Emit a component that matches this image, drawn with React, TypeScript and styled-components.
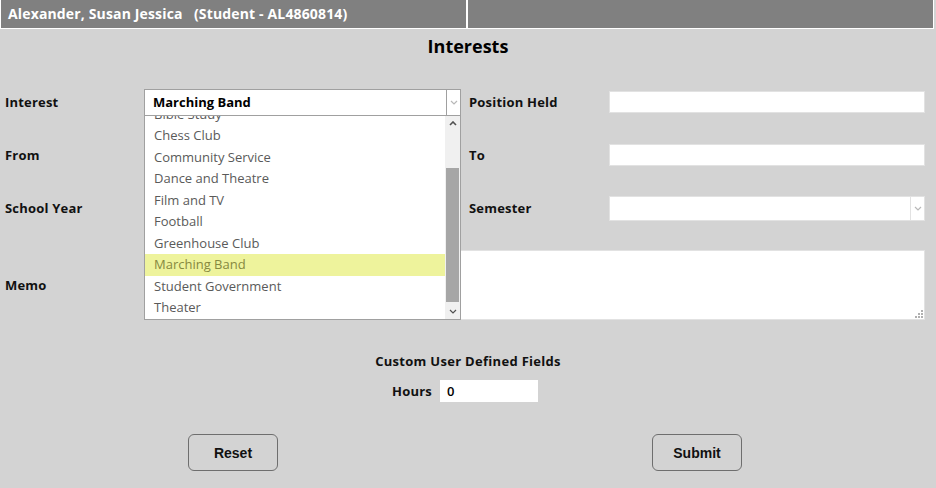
import styled, { createGlobalStyle } from "styled-components";

const GlobalStyle = createGlobalStyle`
  body {
    margin: 0;
    background: #d3d3d3;
    font-family: "Open Sans", "Liberation Sans", sans-serif;
  }
`;

const interests = [
  "Bible Study",
  "Chess Club",
  "Community Service",
  "Dance and Theatre",
  "Film and TV",
  "Football",
  "Greenhouse Club",
  "Marching Band",
  "Student Government",
  "Theater",
];

const Page = styled.div`
  width: 936px;
  height: 488px;
  overflow: hidden;
`;

const HeaderBar = styled.div`
  width: 934px;
  display: grid;
  grid-template-columns: 1fr 1fr;
  column-gap: 2px;
  padding: 0 1px 1px 1px;
  box-sizing: border-box;
  background: #fff;
`;

const HeaderCell = styled.div`
  height: 28px;
  background: #808080;
  color: #fff;
  font-weight: 700;
  font-size: 14px;
  letter-spacing: 0.15px;
  line-height: 28px;
  padding-left: 7px;
  white-space: pre;
`;

const Title = styled.h1`
  margin: 0;
  height: 34px;
  line-height: 34px;
  text-align: center;
  font-size: 18px;
  font-weight: 700;
  color: #000;
`;

const FormGrid = styled.div`
  margin-top: 26px;
  padding-left: 5px;
  display: grid;
  grid-template-columns: 139px 317px 148px 316px;
  grid-template-rows: 26px 22px 26px 70px;
  row-gap: 29px;
  align-items: center;
`;

const Label = styled.div<{ $right?: boolean }>`
  font-size: 13px;
  font-weight: 700;
  letter-spacing: 0.2px;
  color: #111;
  padding-left: ${(p) => (p.$right ? "8px" : "0")};
`;

const MemoLabel = styled(Label)`
  align-self: center;
`;

const TextInput = styled.input`
  box-sizing: border-box;
  width: 100%;
  height: 22px;
  border: 1px solid #e2e2e2;
  background: #fff;
  font-family: inherit;
  font-size: 13px;
  padding: 0 6px;
  outline: none;
`;

const SelectBox = styled.div<{ $open?: boolean }>`
  position: relative;
  box-sizing: border-box;
  height: ${(p) => (p.$open ? "27px" : "25px")};
  border: 1px solid ${(p) => (p.$open ? "#a0a0a0" : "#e2e2e2")};
  background: #fff;
  display: flex;
  align-items: center;
`;

const SelectValue = styled.div`
  flex: 1;
  padding-left: 8px;
  font-size: 13px;
  font-weight: 700;
  color: #000;
`;

const ChevronCell = styled.div<{ $open?: boolean }>`
  width: 13px;
  align-self: stretch;
  border-left: 1px solid ${(p) => (p.$open ? "#a0a0a0" : "#e2e2e2")};
  display: flex;
  align-items: center;
  justify-content: center;
`;

const Dropdown = styled.div`
  position: absolute;
  left: -1px;
  right: -1px;
  top: 100%;
  height: 205px;
  box-sizing: border-box;
  border: 1px solid #a0a0a0;
  background: #fff;
  display: flex;
  z-index: 5;
  overflow: hidden;
`;

const OptionList = styled.div`
  flex: 1;
  overflow: hidden;
`;

const OptionScroll = styled.div`
  margin-top: -12px;
`;

const Option = styled.div<{ $selected?: boolean }>`
  height: 21.5px;
  line-height: 21.5px;
  padding-left: 9px;
  font-size: 13px;
  color: ${(p) => (p.$selected ? "#86893f" : "#5a5a5a")};
  background: ${(p) => (p.$selected ? "#eef39c" : "transparent")};
`;

const ScrollBar = styled.div`
  width: 15px;
  background: #f0f0f0;
  display: flex;
  flex-direction: column;
`;

const ScrollArrow = styled.div`
  height: 15px;
  display: flex;
  align-items: center;
  justify-content: center;
`;

const ScrollTrack = styled.div`
  flex: 1;
  padding-top: 37px;
  padding-bottom: 2px;
  display: flex;
`;

const ScrollThumb = styled.div`
  flex: 1;
  margin: 0 1px;
  background: #a6a6a6;
`;

const MemoWrap = styled.div`
  grid-column: 2 / 5;
  position: relative;
  height: 70px;
`;

const MemoArea = styled.textarea`
  box-sizing: border-box;
  width: 100%;
  height: 70px;
  border: 1px solid #e2e2e2;
  background: #fff;
  resize: none;
  outline: none;
  display: block;
`;

const Grip = styled.svg`
  position: absolute;
  right: 2px;
  bottom: 2px;
`;

const Custom = styled.div`
  margin-top: 31px;
  text-align: center;
  font-size: 13px;
  font-weight: 700;
  letter-spacing: 0.3px;
  color: #111;
  line-height: 20px;
`;

const HoursRow = styled.div`
  margin-top: 9px;
  display: flex;
  align-items: center;
  padding-left: 392px;
  gap: 8px;
`;

const HoursInput = styled.input`
  box-sizing: border-box;
  width: 98px;
  height: 22px;
  border: none;
  background: #fff;
  font-family: inherit;
  font-size: 13px;
  font-weight: 600;
  padding: 0 7px;
  outline: none;
`;

const ButtonRow = styled.div`
  margin-top: 32px;
  display: flex;
  padding-left: 188px;
  gap: 374px;
`;

const Button = styled.button`
  width: 90px;
  height: 37px;
  border: 1px solid #6e6e6e;
  border-radius: 6px;
  background: transparent;
  font-family: "Liberation Sans", Arial, sans-serif;
  font-weight: 700;
  font-size: 14px;
  color: #111;
`;

const Chevron = ({ color, up }: { color: string; up?: boolean }) => (
  <svg width="8" height="5" viewBox="0 0 8 5">
    <path
      d={up ? "M1 4 L4 1 L7 4" : "M1 1 L4 4 L7 1"}
      fill="none"
      stroke={color}
      strokeWidth={up ? 1.6 : 1.2}
    />
  </svg>
);

export default function App() {
  return (
    <Page>
      <GlobalStyle />
      <HeaderBar>
        <HeaderCell>{"Alexander, Susan Jessica   (Student - AL4860814)"}</HeaderCell>
        <HeaderCell />
      </HeaderBar>
      <Title>Interests</Title>
      <FormGrid>
        <Label>Interest</Label>
        <SelectBox $open>
          <SelectValue>Marching Band</SelectValue>
          <ChevronCell $open>
            <Chevron color="#b8b8b8" />
          </ChevronCell>
          <Dropdown>
            <OptionList>
              <OptionScroll>
                {interests.map((i) => (
                  <Option key={i} $selected={i === "Marching Band"}>
                    {i}
                  </Option>
                ))}
              </OptionScroll>
            </OptionList>
            <ScrollBar>
              <ScrollArrow>
                <Chevron color="#505050" up />
              </ScrollArrow>
              <ScrollTrack>
                <ScrollThumb />
              </ScrollTrack>
              <ScrollArrow>
                <Chevron color="#505050" />
              </ScrollArrow>
            </ScrollBar>
          </Dropdown>
        </SelectBox>
        <Label $right>Position Held</Label>
        <TextInput />

        <Label>From</Label>
        <TextInput />
        <Label $right>To</Label>
        <TextInput />

        <Label>School Year</Label>
        <SelectBox>
          <SelectValue />
          <ChevronCell>
            <Chevron color="#b8b8b8" />
          </ChevronCell>
        </SelectBox>
        <Label $right>Semester</Label>
        <SelectBox>
          <SelectValue />
          <ChevronCell>
            <Chevron color="#b8b8b8" />
          </ChevronCell>
        </SelectBox>

        <MemoLabel>Memo</MemoLabel>
        <MemoWrap>
          <MemoArea />
          <Grip width="8" height="8" viewBox="0 0 8 8">
            <rect x="6" y="0" width="2" height="2" fill="#b0b0b0" />
            <rect x="3" y="3" width="2" height="2" fill="#b0b0b0" />
            <rect x="6" y="3" width="2" height="2" fill="#b0b0b0" />
            <rect x="0" y="6" width="2" height="2" fill="#b0b0b0" />
            <rect x="3" y="6" width="2" height="2" fill="#b0b0b0" />
            <rect x="6" y="6" width="2" height="2" fill="#b0b0b0" />
          </Grip>
        </MemoWrap>
      </FormGrid>
      <Custom>Custom User Defined Fields</Custom>
      <HoursRow>
        <Label>Hours</Label>
        <HoursInput defaultValue="0" />
      </HoursRow>
      <ButtonRow>
        <Button>Reset</Button>
        <Button>Submit</Button>
      </ButtonRow>
    </Page>
  );
}
